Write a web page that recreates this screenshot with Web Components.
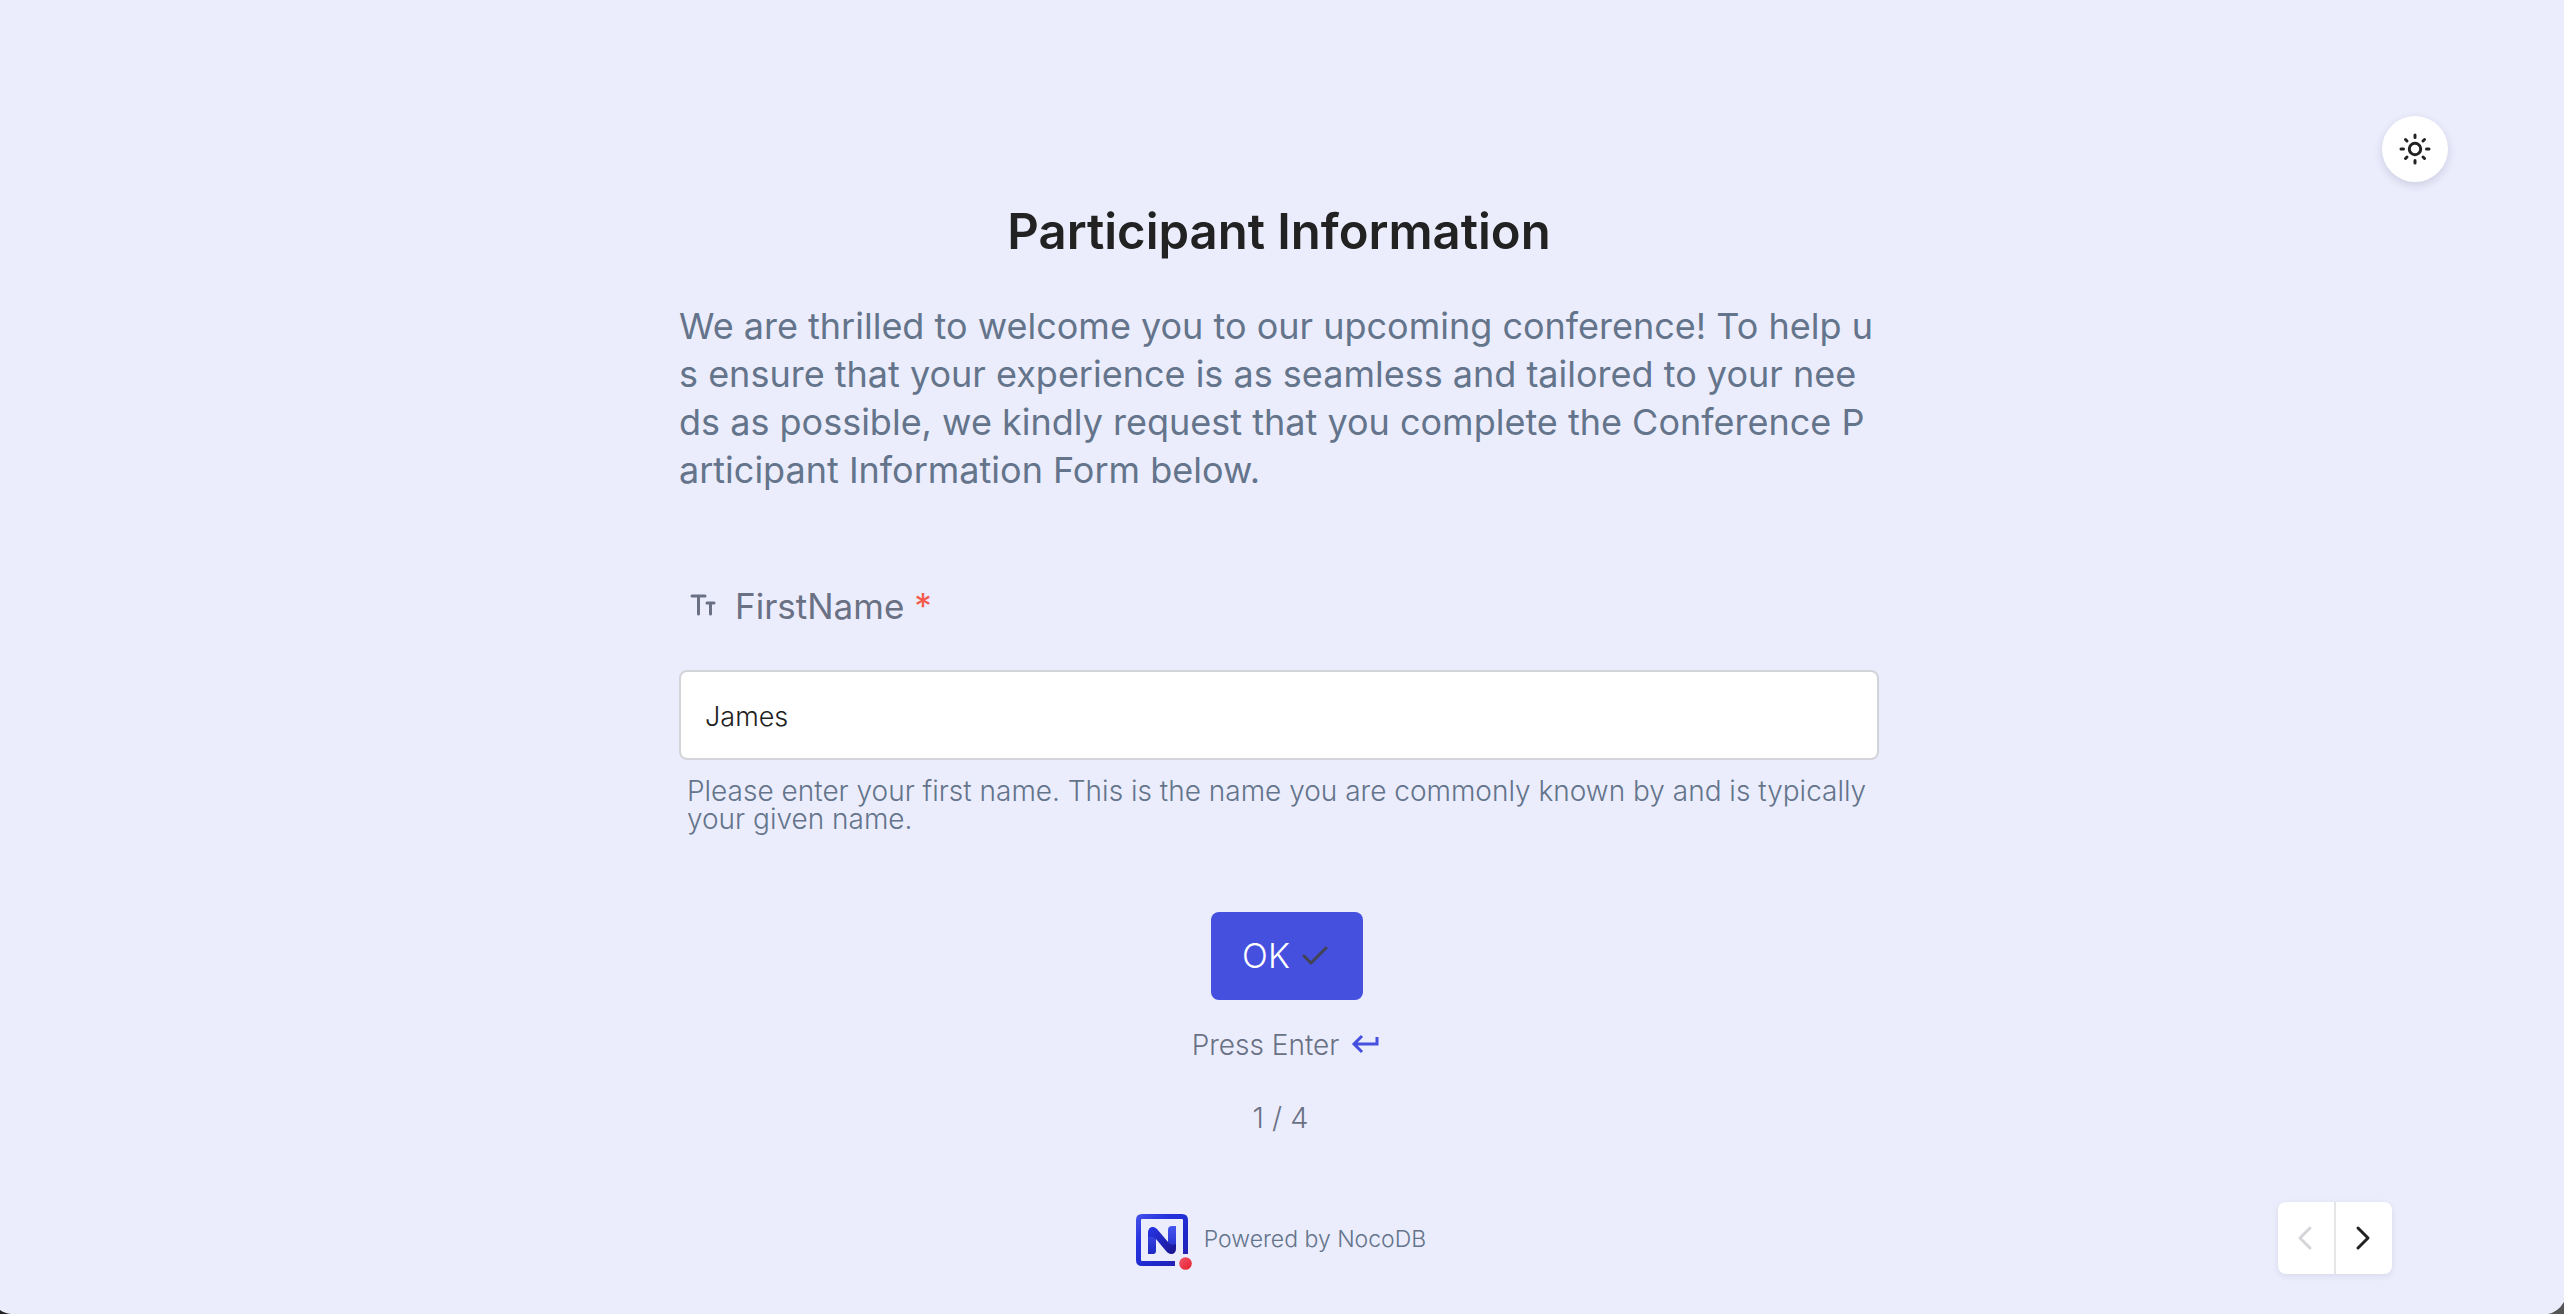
<!DOCTYPE html>
<html lang="en">
<head>
<meta charset="utf-8">
<title>Participant Information</title>
<style>
  body { margin: 0; background: #ebedfc; }
</style>
</head>
<body>
<survey-page>
  <survey-heading slot="form" title-text="Participant Information">We are thrilled to welcome you to our upcoming conference! To help u<br>s ensure that your experience is as seamless and tailored to your nee<br>ds as possible, we kindly request that you complete the Conference P<br>articipant Information Form below.</survey-heading>
  <survey-field slot="form" label="FirstName" value="James" required>Please enter your first name. This is the name you are commonly known by and is typically your given name.</survey-field>
  <survey-submit slot="form">OK</survey-submit>
  <survey-progress slot="form">1 / 4</survey-progress>
  <survey-brand slot="form">Powered by NocoDB</survey-brand>
  <theme-toggle slot="top"></theme-toggle>
  <survey-nav slot="bottom"></survey-nav>
</survey-page>

<script>
const define = (name, html, setup) => {
  const template = document.createElement('template');
  template.innerHTML = html;
  customElements.define(name, class extends HTMLElement {
    constructor() {
      super();
      this.attachShadow({ mode: 'open' }).append(template.content.cloneNode(true));
    }
    connectedCallback() { if (setup) setup(this, this.shadowRoot); }
  });
};

define('survey-page', `
  <style>
    :host { --ink: #222; --muted: #6a7184; --slate: #64748b; --brand: #4650df;
      display: grid; grid-template-columns: 1fr minmax(0, 1200px) 1fr; box-sizing: border-box;
      min-height: 100vh; padding-right: 6px; position: relative; overflow: hidden;
      font-family: Inter, "Open Sans", sans-serif; color: var(--slate); }
    main { grid-column: 2; display: flex; flex-direction: column; padding: 202px 0 40px; }
    aside { display: flex; flex-direction: column; justify-content: space-between; align-items: flex-end; padding: 116px 110px 40px 0; }
    .corner { position: absolute; bottom: 0; display: block; }
    .left { left: 0; }
    .right { right: 0; }
  </style>
  <main><slot name="form"></slot></main>
  <aside><slot name="top"></slot><slot name="bottom"></slot></aside>
  <svg class="corner left" width="12" height="4" viewBox="0 0 12 4" aria-hidden="true"><path d="M0 0Q4 3 11 4H0z" fill="#222"/></svg>
  <svg class="corner right" width="18" height="12" viewBox="0 0 18 12" aria-hidden="true"><path d="M18 0Q12 10 2 12H18z" fill="#555"/></svg>
`);

define('survey-heading', `
  <style>
    :host { display: flex; flex-direction: column; gap: 40px; }
    h1 { margin: 0; font-size: 49px; line-height: 60px; font-weight: 600; text-align: center; color: var(--ink); }
    p { margin: 0; font-size: 36px; line-height: 48px; white-space: nowrap; }
  </style>
  <h1></h1>
  <p><slot></slot></p>
`, (el, root) => { root.querySelector('h1').textContent = el.getAttribute('title-text'); });

define('survey-field', `
  <style>
    :host { display: flex; flex-direction: column; margin-top: 88px; }
    label { display: flex; align-items: center; font-size: 35px; line-height: 48px; padding-left: 8px; margin-bottom: 40px; color: var(--muted); }
    svg { width: 32px; height: 32px; margin-right: 16px; }
    .star { margin-left: 10px; color: #f5594b; }
    input { box-sizing: border-box; width: 100%; height: 90px; padding: 2px 24px 0; border: 2px solid #d3d3da; border-radius: 8px;
      background: #fff; color: var(--ink); font: 300 27px/40px Inter, "Open Sans", sans-serif; outline: none; }
    p { margin: 17px 0 0; padding: 0 8px; font-size: 28px; line-height: 28px; font-weight: 300; }
  </style>
  <label for="answer">
    <svg viewBox="0 0 32 32" fill="none" stroke="currentColor" stroke-width="3" stroke-linecap="round" aria-hidden="true"><path d="M5 6H18M11.500 6V24M20 13H27M23.500 13V24"/></svg>
    <span class="name"></span><span class="star">*</span>
  </label>
  <input id="answer" type="text" aria-describedby="hint">
  <p id="hint"><slot></slot></p>
`, (el, root) => {
  root.querySelector('.name').textContent = el.getAttribute('label');
  root.querySelector('.star').hidden = !el.hasAttribute('required');
  root.querySelector('input').value = el.getAttribute('value');
});

define('survey-submit', `
  <style>
    :host { display: flex; flex-direction: column; align-items: center; gap: 25px; margin-top: 79px; padding-left: 16px; }
    button { display: flex; align-items: center; justify-content: center; gap: 6px; width: 152px; height: 88px; padding: 0; border: 0; border-radius: 8px;
      background: var(--brand); color: #fff; font: 300 34px/48px Inter, "Open Sans", sans-serif; }
    p { display: flex; align-items: center; gap: 9px; margin: 0; font-size: 28px; line-height: 40px; font-weight: 300; color: var(--muted); }
  </style>
  <button type="submit"><slot></slot>
    <svg width="36" height="36" viewBox="0 0 36 36" fill="none" stroke="#434352" stroke-width="3" stroke-linecap="round" stroke-linejoin="round" aria-hidden="true"><path d="M8 18L15 25L30 10"/></svg>
  </button>
  <p>Press Enter
    <svg width="34" height="34" viewBox="0 0 34 34" fill="none" stroke="#4650df" stroke-width="3" aria-hidden="true"><path d="M29 9V16H6M14 8L6 16L14 24"/></svg>
  </p>
`);

define('survey-progress', `
  <style>:host { display: block; margin-top: 33px; padding-left: 3px; text-align: center; font-size: 29px; line-height: 40px; font-weight: 300; color: var(--muted); }</style>
  <slot></slot>
`);

define('survey-brand', `
  <style>
    :host { display: flex; justify-content: center; margin-top: 74px; padding-left: 2px; }
    a { display: flex; align-items: center; gap: 14px; color: inherit; text-decoration: none; font-size: 23px; line-height: 32px; font-weight: 300; }
    svg { overflow: visible; }
  </style>
  <a href="#">
    <svg width="56" height="54" viewBox="0 0 56 54" fill="none" aria-hidden="true">
      <defs>
        <linearGradient id="frame" x1="3" y1="3" x2="52" y2="54" gradientUnits="userSpaceOnUse"><stop stop-color="#4351e8"/><stop offset=".3" stop-color="#2532df"/><stop offset=".7" stop-color="#1e27c8"/><stop offset="1" stop-color="#2a1ea5"/></linearGradient>
        <linearGradient id="bar" x1="0" y1="15" x2="0" y2="42" gradientUnits="userSpaceOnUse"><stop stop-color="#4553ee"/><stop offset="1" stop-color="#1c27c4"/></linearGradient>
        <linearGradient id="fold" x1="15" y1="15" x2="40" y2="42" gradientUnits="userSpaceOnUse"><stop stop-color="#2635e8"/><stop offset="1" stop-color="#1b1590"/></linearGradient>
        <linearGradient id="dot" x1="45" y1="46" x2="57" y2="58" gradientUnits="userSpaceOnUse"><stop stop-color="#f2556b"/><stop offset="1" stop-color="#e5202b"/></linearGradient>
      </defs>
      <path d="M41 51.500H8Q4.500 51.500 4.500 48V8Q4.500 4.500 8 4.500H48Q51.500 4.500 51.500 8V42" stroke="url(#frame)" stroke-width="5"/>
      <path d="M14 42V22Q14 15 20 15L22 22V39Q22 42 19 42z" fill="url(#bar)"/>
      <path d="M42 14V34Q42 42 36 42L34 35V18Q34 14 38 14z" fill="url(#bar)"/>
      <path d="M14 22Q14 15 18.500 15Q21 15 23 17L34 30Q37 34 42 32V36Q42 42 37 42Q34 42 32 39L22 27Q18 23 14 26z" fill="url(#fold)"/>
      <circle cx="51.500" cy="51.500" r="6.300" fill="url(#dot)"/>
    </svg>
    <slot></slot>
  </a>
`);

define('theme-toggle', `
  <style>
    :host { display: block; }
    button { display: grid; place-items: center; width: 66px; height: 66px; padding: 0; border: 0; border-radius: 50%; background: #fff; box-shadow: 0 3px 8px #1f205026; }
  </style>
  <button type="button" aria-label="Toggle theme">
    <svg width="32" height="32" viewBox="0 0 32 32" fill="none" stroke="#222" stroke-width="3" stroke-linecap="round" aria-hidden="true">
      <circle cx="16" cy="16" r="5.700"/>
      <path d="M16 2V4.500M16 27.500V30M2 16H4.500M27.500 16H30M6.500 6.500L8 8M24 24L25.500 25.500M25.500 6.500L24 8M8 24L6.500 25.500"/>
    </svg>
  </button>
`);

define('survey-nav', `
  <style>
    :host { display: block; margin-right: 56px; border-radius: 8px; box-shadow: 0 2px 6px #1f205018; }
    nav { display: flex; gap: 2px; border-radius: 8px; overflow: hidden; background: #e5e5e8; }
    button { display: grid; place-items: center; width: 56px; height: 72px; padding: 0; border: 0; background: #fff; color: var(--ink); }
    button:disabled { color: #d5d5d9; }
  </style>
  <nav aria-label="Questions">
    <button type="button" aria-label="Previous" disabled><svg width="32" height="32" viewBox="0 0 32 32" fill="none" stroke="currentColor" stroke-width="3" stroke-linecap="round" stroke-linejoin="round"><path d="M20 6L10 16L20 26"/></svg></button>
    <button type="button" aria-label="Next"><svg width="32" height="32" viewBox="0 0 32 32" fill="none" stroke="currentColor" stroke-width="3" stroke-linecap="round" stroke-linejoin="round"><path d="M10 6L20 16L10 26"/></svg></button>
  </nav>
`);
</script>
</body>
</html>
